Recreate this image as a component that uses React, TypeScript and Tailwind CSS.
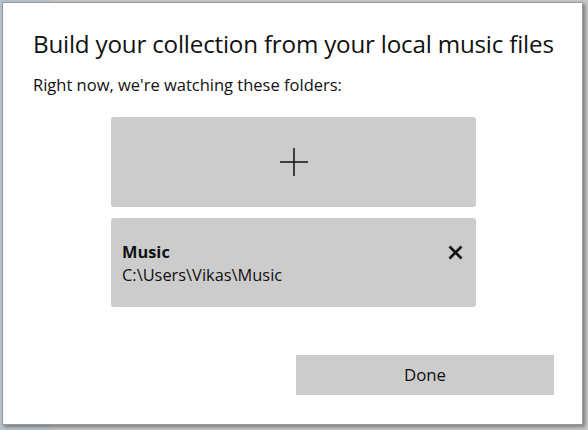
import React from "react";

export default function App() {
  const font = { fontFamily: '"Open Sans", "Noto Sans", sans-serif' };
  return (
    <div className="w-[588px] h-[430px] bg-[#c4c4c4] relative overflow-hidden" style={font}>
      <div className="absolute left-0 top-0 w-[52px] h-[430px] bg-[#b4c2cc]" />
      <div className="absolute left-[2px] top-[2px] w-[581px] h-[423px] bg-white border border-[#9a9a9a] shadow-[2px_2px_3px_rgba(0,0,0,0.35)] flex flex-col">
        <div className="pl-[30px] pt-[25px] text-[24.2px] leading-[32px] text-[#111] tracking-[-0.2px]">
          Build your collection from your local music files
        </div>
        <div className="pl-[30px] pt-[14px] text-[16.5px] leading-[22px] text-[#111]">
          Right now, we're watching these folders:
        </div>
        <div className="pl-[108px] pt-[21px] flex flex-col gap-[11px]">
          <div className="w-[365px] h-[90px] bg-[#cccccc] rounded-[3px] flex items-center justify-center">
            <svg width="30" height="30" viewBox="0 0 30 30">
              <path d="M15 1 V29 M1 15 H29" stroke="#111" strokeWidth="1.5" fill="none" />
            </svg>
          </div>
          <div className="w-[365px] h-[89px] bg-[#cccccc] rounded-[3px] flex items-center justify-between pl-[11px] pr-[13px]">
            <div className="flex flex-col text-[16.4px] leading-[23px] text-[#111]">
              <span className="font-bold">Music</span>
              <span>C:\Users\Vikas\Music</span>
            </div>
            <svg width="15" height="15" viewBox="0 0 15 15" className="mb-[21px]">
              <path d="M1.5 1.5 L13.5 13.5 M13.5 1.5 L1.5 13.5" stroke="#111" strokeWidth="2.7" fill="none" />
            </svg>
          </div>
        </div>
        <div className="flex justify-end pr-[28px] pt-[48px]">
          <div className="w-[258px] h-[40px] bg-[#cccccc] flex items-center justify-center text-[16.8px] text-[#111]">
            Done
          </div>
        </div>
      </div>
    </div>
  );
}
